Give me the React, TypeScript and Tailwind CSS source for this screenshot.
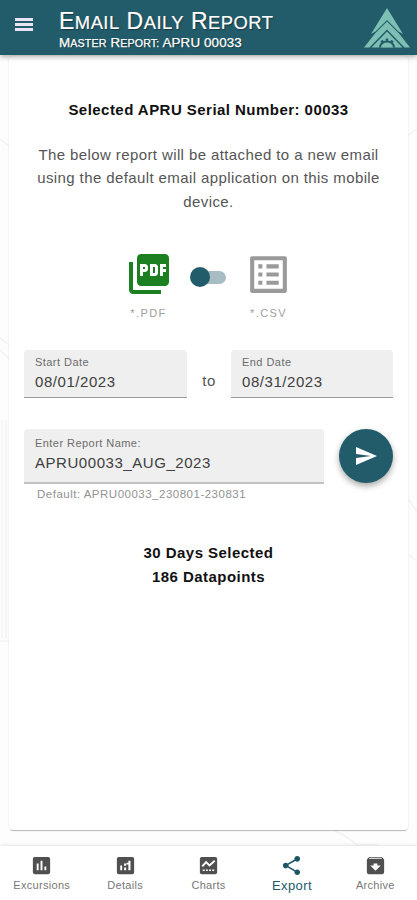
import type { ReactNode } from "react";
import clsx from "clsx";
import { MdArchive, MdAssessment, MdListAlt, MdPictureAsPdf, MdSend, MdShare } from "react-icons/md";

function Logo() {
  return (
    <svg viewBox="0 0 46 40" className="h-10 w-[46px]">
      <g fill="#7dbfb3">
        <path d="M23 0 39 26 34.500 23.500 23 12 11.500 23.500 7 26Z" />
        <path d="M23 13.500 35 25.500 46 39.500H40.500L23 21.500 5.500 39.500H0L11 25.500Z" />
        <path d="M23 23.500 38.500 39.500H7.500Z" />
      </g>
      <path d="M15 39.500a8 7 0 0 1 16 0Z" fill="#225b69" />
      <path d="M23 30.500v3M17.500 32.500l2 3M28.500 32.500l-2 3" stroke="#225b69" strokeWidth="2.500" />
      <path d="M17 39.500a6 5 0 0 1 12 0Z" fill="#7dbfb3" />
    </svg>
  );
}

function DetailsIcon() {
  return (
    <svg viewBox="0 0 24 24" className="size-[23px]" fill="currentColor">
      <path
        fillRule="evenodd"
        d="M5 3h14a2 2 0 0 1 2 2v14a2 2 0 0 1-2 2H5a2 2 0 0 1-2-2V5c0-1.100.9-2 2-2ZM6.500 12v5h2v-5ZM10.500 14v3h2.200v-3ZM10.500 10v2.200h2.200V10ZM15 7v10h2.200V7ZM13 9v2h2V9Z"
      />
    </svg>
  );
}

function ChartsIcon() {
  return (
    <svg viewBox="0 0 24 24" className="size-[23px]">
      <rect x="3" y="3" width="18" height="18" rx="2" fill="currentColor" />
      <path d="m5.500 13 4-4.500 3.500 3.500L18.500 7" fill="none" stroke="#fff" strokeWidth="2" />
      <path d="M6 17h12" stroke="#fff" strokeWidth="1.600" strokeDasharray="2 1.300" />
    </svg>
  );
}

// full-size initial followed by capitals at 80%
function Caps({ word }: { word: string }) {
  return (
    <>
      {word.charAt(0)}
      <span className="text-[0.8em] uppercase">{word.slice(1)}</span>
    </>
  );
}

function Field({ label, value, className }: { label: string; value: string; className?: string }) {
  return (
    <div className={clsx("flex flex-col rounded-t-[4px] bg-[#efefef] pl-[11px]", className)}>
      <span className="text-[11px] leading-[14px] tracking-[0.45px] text-[#6c6c6c]">{label}</span>
      <span className="mt-0.5 text-[15px] leading-[22px] tracking-[0.55px] text-[#404040]">{value}</span>
    </div>
  );
}

function FormatOption({ label, children }: { label: string; children: ReactNode }) {
  return (
    <div className="flex w-12 flex-col items-center">
      <div className="flex h-12 items-center">{children}</div>
      <span className="mt-[7px] text-[11px] leading-4 tracking-[1.4px] text-[#a0a0a0]">{label}</span>
    </div>
  );
}

const tabs = [
  { label: "Excursions", icon: <MdAssessment className="size-[23px]" /> },
  { label: "Details", icon: <DetailsIcon /> },
  { label: "Charts", icon: <ChartsIcon /> },
  { label: "Export", icon: <MdShare className="size-[23px] text-[#1c5564]" />, active: true },
  { label: "Archive", icon: <MdArchive className="size-[23px]" /> },
];

export default function App() {
  return (
    <div className="relative flex h-[900px] w-[417px] flex-col overflow-hidden bg-[#fdfdfd] font-['Liberation_Sans',Arial,sans-serif]">
      {/* faint contour lines behind the card */}
      <svg className="absolute inset-0" width="417" height="900" fill="none" stroke="#f3f3f3" strokeWidth="1.500">
        <path d="M0 139l9 7M0 338l9 7M0 350l9 9M2 420V638M6 420V638M0 641h9M335 831q12 5 22 14h20M408 135l9-6M409 500l8 12M409 555l8 6" />
      </svg>

      <header className="relative z-10 flex h-[55px] shrink-0 items-center bg-[#225b69] text-white shadow-[0_2px_5px_rgba(0,0,0,0.3)]">
        <div className="mb-[6px] ml-[15px] flex w-[18px] flex-col gap-[2px]">
          <div className="h-[3px] bg-[#e9e3f5]" />
          <div className="h-[3px] bg-[#e9e3f5]" />
          <div className="h-[3px] bg-[#e9e3f5]" />
        </div>
        <div className="ml-[26px] flex-1 pt-[5px] whitespace-nowrap [text-shadow:1px_1px_1px_rgba(0,0,0,0.4)]">
          <h1 className="text-[23px] leading-[24px] tracking-[0.48px] [-webkit-text-stroke:0.2px_white]">
            <Caps word="Email" /> <Caps word="Daily" /> <Caps word="Report" />
          </h1>
          <p className="text-[13.400px] leading-[15px] tracking-[0.12px] [-webkit-text-stroke:0.25px_white]">
            <Caps word="Master" /> <Caps word="Report:" /> APRU 00033
          </p>
        </div>
        <div className="mr-[7px]">
          <Logo />
        </div>
      </header>

      <main className="relative mx-[9px] mt-px flex h-[774px] flex-col rounded-[4px] bg-white shadow-[0_2px_1px_-1px_rgba(0,0,0,0.25),0_0_2px_rgba(0,0,0,0.12)]">
        <p className="mt-[42px] text-center text-[15px] leading-[23px] font-bold tracking-[0.46px] text-[#111]">
          Selected APRU Serial Number: 00033
        </p>
        <p className="mx-5 mt-[22px] text-center text-[15px] leading-[23.400px] tracking-[0.4px] text-[#555]">
          The below report will be attached to a new email using the default email application on this mobile device.
        </p>

        <div className="mt-[37px] flex items-start justify-center">
          <FormatOption label="*.PDF">
            <MdPictureAsPdf className="size-12 text-[#1c7f20]" />
          </FormatOption>
          <div className="mx-[17px] mt-[17px] flex h-[20px] w-[38px] items-center">
            <div className="relative size-5 shrink-0 rounded-full bg-[#225b69]" />
            <div className="-ml-[10px] h-[13px] w-[26px] rounded-full bg-[#a7bdc3]" />
          </div>
          <FormatOption label="*.CSV">
            <MdListAlt className="size-[49px] text-[#9a9a9a]" />
          </FormatOption>
        </div>

        <div className="mx-[15px] mt-[29px] flex items-center">
          <Field label="Start Date" value="08/01/2023" className="h-[48px] w-[163px] border-b border-[#999] pt-[5px]" />
          <span className="mt-[15px] flex-1 text-center text-[15px] tracking-[0.4px] text-[#555]">to</span>
          <Field label="End Date" value="08/31/2023" className="h-[48px] w-[162px] border-b border-[#999] pt-[5px]" />
        </div>

        <div className="mx-[15px] mt-[31px] flex items-start">
          <div className="w-[300px]">
            <Field
              label="Enter Report Name:"
              value="APRU00033_AUG_2023"
              className="h-[55px] border-b-2 border-[#c2c2c2] pt-[7px]"
            />
            <p className="mt-[2px] pl-[13px] text-[11.500px] leading-[16px] tracking-[0.5px] text-[#929292]">
              Default: APRU00033_230801-230831
            </p>
          </div>
          <button
            type="button"
            className="ml-[15px] flex size-[54px] items-center justify-center rounded-full bg-[#225b69] text-white shadow-[0_3px_6px_rgba(0,0,0,0.35)]"
          >
            <MdSend className="size-[24px]" />
          </button>
        </div>

        <div className="mt-[39px] text-center text-[15px] leading-[23.500px] font-bold tracking-[0.46px] text-[#111]">
          <p>30 Days Selected</p>
          <p>186 Datapoints</p>
        </div>
      </main>

      <nav className="relative mt-auto flex h-[54px] shrink-0 bg-white text-[#505050] shadow-[0_-1px_3px_rgba(0,0,0,0.1)]">
        {tabs.map((tab) => (
          <div key={tab.label} className="flex flex-1 flex-col items-center pt-[8px]">
            {tab.icon}
            <span
              className={clsx(
                "mt-px",
                tab.active
                  ? "text-[13px] leading-[15px] tracking-[0.400px] text-[#225b69]"
                  : "text-[11px] leading-[14px] tracking-[0.300px] text-[#777]",
              )}
            >
              {tab.label}
            </span>
          </div>
        ))}
      </nav>
    </div>
  );
}
